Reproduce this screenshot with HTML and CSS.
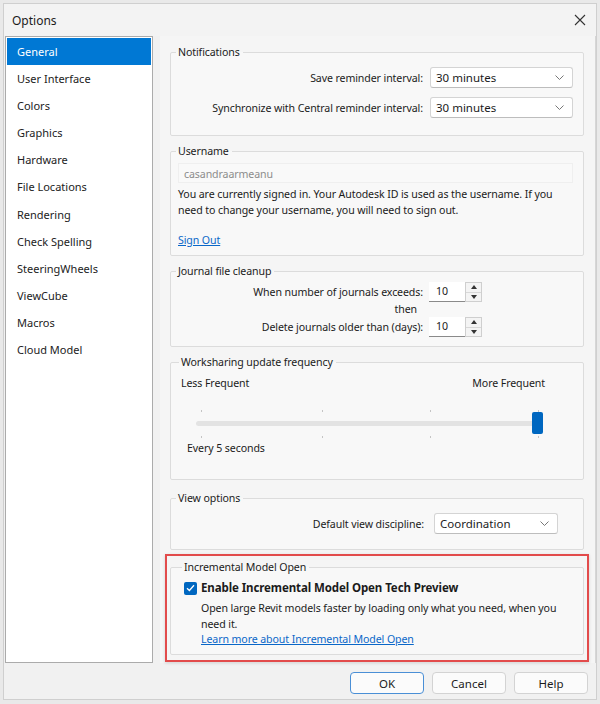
FILE: index.html
```html
<!DOCTYPE html>
<html lang="en">
<head>
    <meta charset="UTF-8">
    <title>Options</title>
    <link rel="stylesheet" href="styles.css">
</head>
<body>
    <div class="dialog">
        <div class="titlebar">
            <span class="title">Options</span>
            <svg class="close" width="12" height="12" viewBox="0 0 12 12">
                <path d="M1 1 L11 11 M11 1 L1 11" stroke="#333" stroke-width="1.1" fill="none"/>
            </svg>
        </div>

        <div class="main">
            <ul class="nav">
                <li class="active">General</li>
                <li>User Interface</li>
                <li>Colors</li>
                <li>Graphics</li>
                <li>Hardware</li>
                <li>File Locations</li>
                <li>Rendering</li>
                <li>Check Spelling</li>
                <li>SteeringWheels</li>
                <li>ViewCube</li>
                <li>Macros</li>
                <li>Cloud Model</li>
            </ul>

            <div class="panel">
                <!-- Notifications -->
                <fieldset class="group notifications">
                    <legend>Notifications</legend>
                    <div class="form-grid">
                        <label>Save reminder interval:</label>
                        <div class="select">
                            <span>30 minutes</span>
                            <svg width="9" height="5" viewBox="0 0 9 5"><path d="M0.5 0.5 L4.5 4.5 L8.5 0.5" stroke="#777" fill="none"/></svg>
                        </div>
                        <label>Synchronize with Central reminder interval:</label>
                        <div class="select">
                            <span>30 minutes</span>
                            <svg width="9" height="5" viewBox="0 0 9 5"><path d="M0.5 0.5 L4.5 4.5 L8.5 0.5" stroke="#777" fill="none"/></svg>
                        </div>
                    </div>
                </fieldset>

                <!-- Username -->
                <fieldset class="group username">
                    <legend>Username</legend>
                    <div class="readonly-input">casandraarmeanu</div>
                    <p class="note">You are currently signed in. Your Autodesk ID is used as the username. If you need to change your username, you will need to sign out.</p>
                    <a class="link sign-out" href="#">Sign Out</a>
                </fieldset>

                <!-- Journal file cleanup -->
                <fieldset class="group journals">
                    <legend>Journal file cleanup</legend>
                    <div class="form-grid spin-grid">
                        <label>When number of journals exceeds:</label>
                        <div class="spinner">
                            <span class="spin-value">10</span>
                            <div class="spin-buttons">
                                <span class="spin-up"></span>
                                <span class="spin-down"></span>
                            </div>
                        </div>
                        <label class="then">then</label>
                        <div></div>
                        <label>Delete journals older than (days):</label>
                        <div class="spinner">
                            <span class="spin-value">10</span>
                            <div class="spin-buttons">
                                <span class="spin-up"></span>
                                <span class="spin-down"></span>
                            </div>
                        </div>
                    </div>
                </fieldset>

                <!-- Worksharing -->
                <fieldset class="group worksharing">
                    <legend>Worksharing update frequency</legend>
                    <div class="slider-labels">
                        <span>Less Frequent</span>
                        <span>More Frequent</span>
                    </div>
                    <div class="slider">
                        <div class="ticks top"><i></i><i></i><i></i><i></i></div>
                        <div class="track"></div>
                        <div class="ticks"><i></i><i></i><i></i><i></i></div>
                        <div class="thumb"></div>
                    </div>
                    <div class="slider-value">Every 5 seconds</div>
                </fieldset>

                <!-- View options -->
                <fieldset class="group view-options">
                    <legend>View options</legend>
                    <div class="form-grid view-grid">
                        <label>Default view discipline:</label>
                        <div class="select">
                            <span>Coordination</span>
                            <svg width="9" height="5" viewBox="0 0 9 5"><path d="M0.5 0.5 L4.5 4.5 L8.5 0.5" stroke="#777" fill="none"/></svg>
                        </div>
                    </div>
                </fieldset>

                <!-- Incremental Model Open (highlighted) -->
                <div class="highlight">
                    <fieldset class="group incremental">
                        <legend>Incremental Model Open</legend>
                        <div class="check-row">
                            <span class="checkbox">
                                <svg width="9" height="8" viewBox="0 0 9 8"><path d="M1 4.2 L3.4 6.5 L8 1.3" stroke="#fff" stroke-width="1.3" fill="none"/></svg>
                            </span>
                            <strong>Enable Incremental Model Open Tech Preview</strong>
                        </div>
                        <div class="check-body">
                            <p>Open large Revit models faster by loading only what you need, when you need it.</p>
                            <a class="link" href="#">Learn more about Incremental Model Open</a>
                        </div>
                    </fieldset>
                </div>
            </div>
        </div>

        <div class="footer">
            <button class="btn primary">OK</button>
            <button class="btn">Cancel</button>
            <button class="btn">Help</button>
        </div>
    </div>
</body>
</html>
```

FILE: styles.css
```css
* {
    box-sizing: border-box;
}

body {
    margin: 0;
    background: #e9e9e9;
    font-family: 'Segoe UI', 'Noto Sans', Arial, sans-serif;
    font-size: 10.6px;
    letter-spacing: -0.1px;
    color: #1b1b1b;
}

.dialog {
    margin: 3px 3px 0 3px;
    height: 697px;
    border: 1px solid #cfcfcf;
    background: #f1f1f1;
    display: flex;
    flex-direction: column;
}

.titlebar {
    height: 32px;
    display: flex;
    align-items: center;
    justify-content: space-between;
    padding: 0 10px 0 8px;
    background: #f3f3f3;
}

.title {
    font-size: 12px;
    letter-spacing: 0;
}

.main {
    display: flex;
    height: 627px;
}

/* left category list */
.nav {
    list-style: none;
    margin: 0 0 0 1px;
    padding: 1px 0 0;
    width: 148px;
    background: white;
    border: 1px solid #ababab;
    font-size: 11px;
    letter-spacing: 0;
}

.nav li {
    height: 27.1px;
    line-height: 27px;
    padding-left: 10px;
    margin: 0 1px;
    color: #222;
}

.nav li.active {
    background: #0078d4;
    color: white;
}

.panel {
    margin-left: 7px;
    width: 436px;
    padding: 8px 11px 0 10px;
    background: #f5f5f5;
    border-right: 1px solid #d6d6d6;
}

/* group boxes */
.group {
    margin: 0 0 7px;
    padding: 0 10px 0 7px;
    border: 1px solid #dcdcdc;
    border-radius: 2px;
    background: #f8f8f8;
    min-width: 0;
}

.group legend {
    padding: 0 3px 0 2px;
    margin-left: -2px;
    line-height: 16px;
}

.form-grid {
    display: grid;
    align-items: center;
    column-gap: 7px;
}

.form-grid label {
    text-align: right;
}

.notifications {
    padding-top: 7px;
    padding-bottom: 17px;
}

.notifications .form-grid {
    grid-template-columns: 1fr 143px;
    row-gap: 9px;
}

.select {
    height: 21px;
    background: white;
    border: 1px solid #d4d4d4;
    border-bottom-color: #bdbdbd;
    border-radius: 3px;
    display: flex;
    align-items: center;
    justify-content: space-between;
    padding: 0 8px 0 5px;
    font-size: 11.5px;
    letter-spacing: 0;
}

.username {
    padding-top: 4px;
    padding-bottom: 7px;
}

.readonly-input {
    height: 20px;
    line-height: 20px;
    padding-left: 5px;
    color: #8c8c8c;
    background: #f9f9f9;
    border: 1px solid #efefef;
}

.note {
    margin: 3px 0 14px;
    line-height: 16px;
}

.link {
    color: #0a67c8;
    text-decoration: underline;
    line-height: 16px;
    display: inline-block;
}

.journals {
    padding-top: 3px;
    padding-bottom: 9px;
}

.spin-grid {
    grid-template-columns: 245px 53px;
    column-gap: 6px;
}

.spin-grid .then {
    line-height: 15px;
    padding-right: 6px;
    text-align: right;
}

.spinner {
    height: 20px;
    display: flex;
}

.spin-value {
    width: 36px;
    padding-left: 7px;
    line-height: 19px;
    background: white;
    border-bottom: 1px solid #8a8a8a;
}

.spin-buttons {
    width: 17px;
    display: flex;
    flex-direction: column;
    border: 1px solid #cfcfcf;
    background: #f4f4f4;
}

.spin-up,
.spin-down {
    flex: 1;
    display: flex;
    align-items: center;
    justify-content: center;
}

.spin-up {
    border-bottom: 1px solid #d8d8d8;
}

.spin-up::after {
    content: "";
    border: 3px solid transparent;
    border-bottom: 4px solid #333;
    border-top: 0;
}

.spin-down::after {
    content: "";
    border: 3px solid transparent;
    border-top: 4px solid #333;
    border-bottom: 0;
}

.worksharing {
    margin-bottom: 10px;
    padding: 5px 38px 23px 10px;
}

.slider-labels {
    display: flex;
    justify-content: space-between;
    line-height: 16px;
}

.slider {
    position: relative;
    margin: 18px 0 0 15px;
    width: 347px;
}

/* tick marks are not evenly spaced in the original */
.ticks {
    display: grid;
    grid-template-columns: 121px 108px 108px 1px;
    padding-left: 5px;
    height: 3px;
}

.ticks.top {
    align-items: end;
}

.ticks i {
    width: 1px;
    height: 2px;
    background: #c4c4c4;
}

.track {
    margin: 9px 0 10px;
    height: 5px;
    border-radius: 3px;
    background: #e3e3e3;
}

.thumb {
    position: absolute;
    right: 0;
    top: 3px;
    width: 11px;
    height: 22px;
    border-radius: 2px;
    background: #0067c0;
}

.slider-value {
    margin: 1px 0 0 6px;
    line-height: 16px;
}

.view-options {
    margin-bottom: 4px;
    padding-top: 7px;
    padding-bottom: 15px;
    padding-right: 25px;
}

.view-grid {
    grid-template-columns: 1fr 124px;
    column-gap: 10px;
}

/* red call-out around the last group */
.highlight {
    margin: 0 -5px;
    padding: 3px 3px 5px 3px;
    border: 2px solid #e24b4b;
    box-shadow: 0 1px 3px rgba(0,0,0,0.15);
}

.incremental {
    margin: 0;
    padding: 5px 10px 7px 13px;
}

.check-row {
    display: flex;
    align-items: center;
    gap: 4px;
    line-height: 16px;
}

.check-row strong {
    font-size: 11.5px;
}

.checkbox {
    width: 13px;
    height: 13px;
    border-radius: 2px;
    background: #0067c0;
    display: flex;
    align-items: center;
    justify-content: center;
}

.check-body {
    padding-left: 17px;
}

.check-body p {
    margin: 4px 0 0;
    line-height: 16px;
}

.check-body .link {
    margin-top: -2px;
}

.footer {
    flex: 1;
    display: flex;
    justify-content: flex-end;
    align-items: flex-start;
    gap: 8px;
    padding: 9px 8px 0 0;
}

.btn {
    width: 74px;
    height: 22px;
    font-family: inherit;
    font-size: 11.5px;
    color: #1b1b1b;
    background: #fbfbfb;
    border: 1px solid #d3d3d3;
    border-radius: 4px;
}

.btn.primary {
    border: 1.5px solid #4a8fd6;
}
```
